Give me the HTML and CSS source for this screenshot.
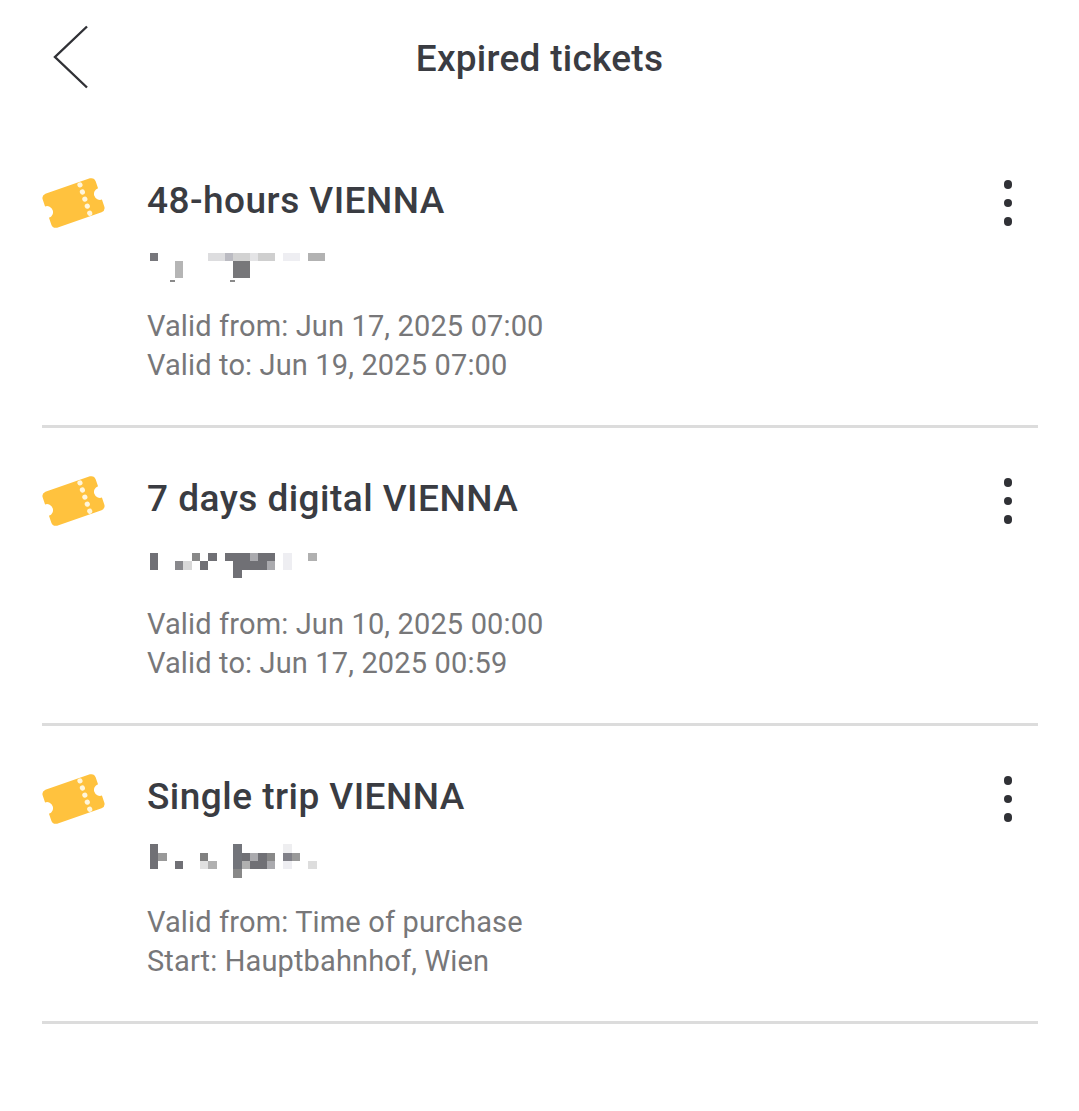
FILE: index.html
```html
<!DOCTYPE html>
<html lang="en">

<head>
  <meta charset="UTF-8">
  <meta name="viewport" content="width=device-width, initial-scale=1.0">

  <title>Expired tickets</title>
  <link rel="stylesheet" href="styles.css">
</head>

<body>
  <header class="top-bar">
    <button class="back-button" type="button" aria-label="Back">
      <svg width="36" height="64" viewBox="0 0 36 64">
        <path d="M34 1.500 L2 32 L34 62.500" fill="none" stroke="#303136" stroke-width="2.400"/>
      </svg>
    </button>
    <h1 class="page-title">Expired tickets</h1>
  </header>

  <ul class="ticket-list">
    <li class="ticket">
      <svg class="ticket-icon" width="64" height="54" viewBox="0 0 64 54">
        <g transform="translate(31.500 26) rotate(-19)">
          <path class="ticket-body" d="M-23.500 -18 H23.500 A5 5 0 0 1 28 -13 V-6 A6 6 0 0 0 28 6 V13 A5 5 0 0 1 23.500 18 H-23.500 A5 5 0 0 1 -28 13 V6 A6 6 0 0 0 -28 -6 V-13 A5 5 0 0 1 -23.500 -18 Z"/>
          <circle class="ticket-dot" cx="12" cy="-15" r="2.600"/>
          <circle class="ticket-dot" cx="12" cy="-7.500" r="2.600"/>
          <circle class="ticket-dot" cx="12" cy="0" r="2.600"/>
          <circle class="ticket-dot" cx="12" cy="7.500" r="2.600"/>
          <circle class="ticket-dot" cx="12" cy="15" r="2.600"/>
        </g>
      </svg>
      <div class="ticket-info">
        <h2 class="ticket-name">48-hours VIENNA</h2>
        <svg class="ticket-mosaic" width="180" height="36" viewBox="148 248 180 36" shape-rendering="crispEdges">
          <rect x="150" y="253" width="8" height="8" fill="#77777c"/>
          <rect x="208" y="253" width="17" height="8" fill="#dddddf"/>
          <rect x="225" y="253" width="8" height="8" fill="#bbbbc2"/>
          <rect x="233" y="253" width="17" height="8" fill="#d2d2d2"/>
          <rect x="250" y="253" width="8" height="8" fill="#e4e4e6"/>
          <rect x="258" y="253" width="17" height="8" fill="#cfcfcf"/>
          <rect x="283" y="253" width="17" height="8" fill="#eeeef2"/>
          <rect x="308" y="253" width="17" height="8" fill="#b2b2b2"/>
          <rect x="175" y="261" width="8" height="17" fill="#b5b5b5"/>
          <rect x="233" y="261" width="17" height="17" fill="#77777a"/>
          <rect x="170" y="280" width="5" height="2" fill="#8a8a8a"/>
          <rect x="230" y="280" width="5" height="2" fill="#8a8a8a"/>
        </svg>
        <p class="ticket-detail">Valid from: Jun 17, 2025 07:00</p>
        <p class="ticket-detail">Valid to: Jun 19, 2025 07:00</p>
      </div>
      <button class="more-button" type="button" aria-label="More"><span></span><span></span><span></span></button>
    </li>

    <li class="ticket">
      <svg class="ticket-icon" width="64" height="54" viewBox="0 0 64 54">
        <g transform="translate(31.500 26) rotate(-19)">
          <path class="ticket-body" d="M-23.500 -18 H23.500 A5 5 0 0 1 28 -13 V-6 A6 6 0 0 0 28 6 V13 A5 5 0 0 1 23.500 18 H-23.500 A5 5 0 0 1 -28 13 V6 A6 6 0 0 0 -28 -6 V-13 A5 5 0 0 1 -23.500 -18 Z"/>
          <circle class="ticket-dot" cx="12" cy="-15" r="2.600"/>
          <circle class="ticket-dot" cx="12" cy="-7.500" r="2.600"/>
          <circle class="ticket-dot" cx="12" cy="0" r="2.600"/>
          <circle class="ticket-dot" cx="12" cy="7.500" r="2.600"/>
          <circle class="ticket-dot" cx="12" cy="15" r="2.600"/>
        </g>
      </svg>
      <div class="ticket-info">
        <h2 class="ticket-name">7 days digital VIENNA</h2>
        <svg class="ticket-mosaic" width="180" height="36" viewBox="148 546 180 36" shape-rendering="crispEdges">
          <rect x="150" y="553" width="8" height="17" fill="#707075"/>
          <rect x="192" y="553" width="8" height="8" fill="#888888"/>
          <rect x="208" y="553" width="9" height="8" fill="#707075"/>
          <rect x="225" y="553" width="25" height="8" fill="#707075"/>
          <rect x="250" y="553" width="8" height="8" fill="#aaaaae"/>
          <rect x="258" y="553" width="17" height="8" fill="#6f6f74"/>
          <rect x="283" y="553" width="9" height="17" fill="#eeeef2"/>
          <rect x="308" y="553" width="9" height="8" fill="#b0b0b0"/>
          <rect x="175" y="561" width="8" height="9" fill="#88888c"/>
          <rect x="183" y="561" width="9" height="9" fill="#d8d8d8"/>
          <rect x="200" y="561" width="8" height="9" fill="#707075"/>
          <rect x="233" y="561" width="34" height="9" fill="#707075"/>
          <rect x="267" y="561" width="8" height="9" fill="#aaaaae"/>
          <rect x="233" y="570" width="9" height="8" fill="#707075"/>
        </svg>
        <p class="ticket-detail">Valid from: Jun 10, 2025 00:00</p>
        <p class="ticket-detail">Valid to: Jun 17, 2025 00:59</p>
      </div>
      <button class="more-button" type="button" aria-label="More"><span></span><span></span><span></span></button>
    </li>

    <li class="ticket">
      <svg class="ticket-icon" width="64" height="54" viewBox="0 0 64 54">
        <g transform="translate(31.500 26) rotate(-19)">
          <path class="ticket-body" d="M-23.500 -18 H23.500 A5 5 0 0 1 28 -13 V-6 A6 6 0 0 0 28 6 V13 A5 5 0 0 1 23.500 18 H-23.500 A5 5 0 0 1 -28 13 V6 A6 6 0 0 0 -28 -6 V-13 A5 5 0 0 1 -23.500 -18 Z"/>
          <circle class="ticket-dot" cx="12" cy="-15" r="2.600"/>
          <circle class="ticket-dot" cx="12" cy="-7.500" r="2.600"/>
          <circle class="ticket-dot" cx="12" cy="0" r="2.600"/>
          <circle class="ticket-dot" cx="12" cy="7.500" r="2.600"/>
          <circle class="ticket-dot" cx="12" cy="15" r="2.600"/>
        </g>
      </svg>
      <div class="ticket-info">
        <h2 class="ticket-name">Single trip VIENNA</h2>
        <svg class="ticket-mosaic" width="180" height="36" viewBox="148 844 180 36" shape-rendering="crispEdges">
          <rect x="150" y="844" width="8" height="25" fill="#707075"/>
          <rect x="233" y="844" width="9" height="25" fill="#72747a"/>
          <rect x="283" y="844" width="9" height="9" fill="#eeeef0"/>
          <rect x="158" y="853" width="9" height="8" fill="#999999"/>
          <rect x="200" y="853" width="8" height="8" fill="#808080"/>
          <rect x="242" y="853" width="8" height="8" fill="#707075"/>
          <rect x="250" y="853" width="8" height="8" fill="#aaaaae"/>
          <rect x="258" y="853" width="9" height="8" fill="#707075"/>
          <rect x="267" y="853" width="8" height="8" fill="#888888"/>
          <rect x="283" y="853" width="9" height="8" fill="#808088"/>
          <rect x="292" y="853" width="8" height="8" fill="#999999"/>
          <rect x="175" y="861" width="8" height="8" fill="#707075"/>
          <rect x="200" y="861" width="8" height="8" fill="#e0e0e0"/>
          <rect x="208" y="861" width="9" height="8" fill="#b0b0b0"/>
          <rect x="242" y="861" width="8" height="8" fill="#b0b0b0"/>
          <rect x="250" y="861" width="17" height="8" fill="#707075"/>
          <rect x="267" y="861" width="8" height="8" fill="#aaaaae"/>
          <rect x="283" y="861" width="9" height="8" fill="#eeeef2"/>
          <rect x="308" y="861" width="9" height="8" fill="#dddddd"/>
          <rect x="233" y="869" width="9" height="9" fill="#888888"/>
        </svg>
        <p class="ticket-detail">Valid from: Time of purchase</p>
        <p class="ticket-detail">Start: Hauptbahnhof, Wien</p>
      </div>
      <button class="more-button" type="button" aria-label="More"><span></span><span></span><span></span></button>
    </li>
  </ul>
</body>
</html>
```

FILE: styles.css
```css
/* Expired tickets screen */

body {
  margin: 0;
  background-color: #fff;
  color: #3a3c42;
  font-family: Roboto, "Liberation Sans", sans-serif;
}

button {
  padding: 0;
  border: none;
  background: none;
}

.top-bar {
  display: flex;
  justify-content: center;
  align-items: center;
  position: relative;
  height: 118px;
}

.back-button {
  position: absolute;
  left: 53px;
  top: 25px;
  height: 64px;
}

.back-button svg {
  display: block;
}

.page-title {
  margin: 0;
  font-size: 37px;
  font-weight: 500;
  letter-spacing: 0.27px;
  line-height: 44px;
}

.ticket-list {
  margin: 0 41px 0 42px;
  padding: 12px 0 0;
  list-style: none;
}

.ticket {
  display: flex;
  align-items: flex-start;
  height: 246px;
  padding-top: 49px;
  border-bottom: 3px solid #dcdcdc;
}

.ticket-icon {
  flex: none;
  margin-top: -2px;
}

.ticket-info {
  flex: 1;
  margin-left: 41px;
}

.ticket-name {
  margin: 0;
  font-size: 37px;
  font-weight: 500;
  letter-spacing: 0.47px;
  line-height: 44px;
}

.ticket-mosaic {
  display: block;
  margin-top: 25px;
  margin-left: 1px;
}

.ticket-detail {
  margin: 0;
  color: #777779;
  font-size: 29px;
  letter-spacing: 0.14px;
  line-height: 39px;
}

.ticket-mosaic + .ticket-detail {
  margin-top: 23px;
}

.more-button {
  display: flex;
  flex-direction: column;
  align-items: center;
  gap: 10px;
  flex: none;
  width: 60px;
  padding-top: 1px;
}

.more-button span {
  width: 8.500px;
  height: 8.500px;
  border-radius: 50%;
  background-color: #303136;
}

.ticket-body {
  fill: #ffc23e;
}

.ticket-dot {
  fill: #fff6dc;
}
```
